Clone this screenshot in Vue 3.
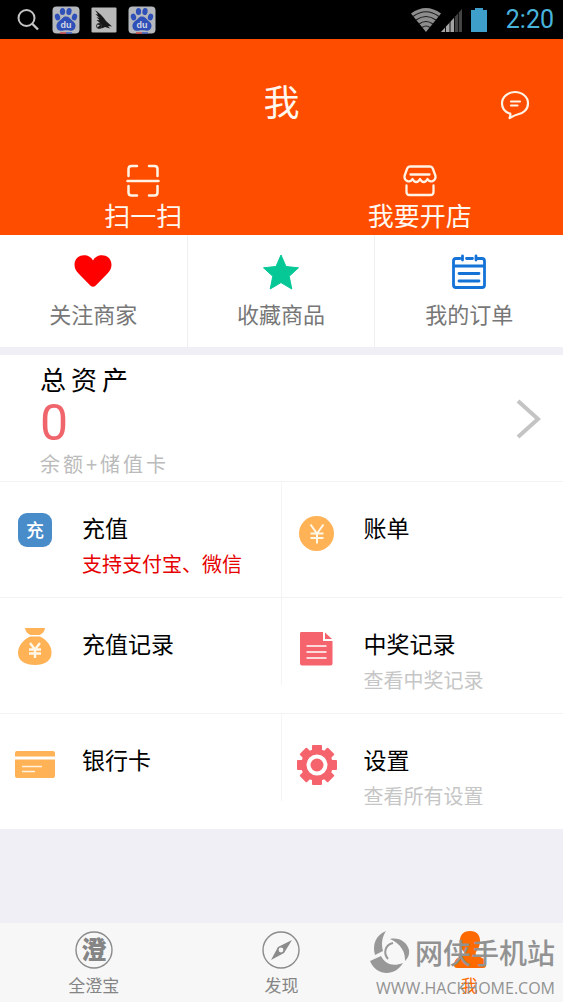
<script setup>
const stats = [
  { id: 'heart', label: '关注商家' },
  { id: 'star', label: '收藏商品' },
  { id: 'order', label: '我的订单' }
]

const items = [
  { id: 'topup', title: '充值', note: '支持支付宝、微信', hot: true },
  { id: 'bill', title: '账单' },
  { id: 'bag', title: '充值记录' },
  { id: 'doc', title: '中奖记录', note: '查看中奖记录' },
  { id: 'card', title: '银行卡' },
  { id: 'gear', title: '设置', note: '查看所有设置' }
]

const teeth = [0, 45, 90, 135, 180, 225, 270, 315]
const tray = ['paw', 'bird', 'paw']
</script>

<template>
  <div class="app">
    <div class="status">
      <div class="tray">
        <svg class="search" width="24" height="24" viewBox="0 0 24 24">
          <circle cx="10.500" cy="10" r="8" fill="none" stroke="#c4c4c4" stroke-width="2" />
          <path d="M16 15.500L22 21.500" stroke="#c4c4c4" stroke-width="2.400" />
        </svg>
        <svg v-for="(kind, i) in tray" :key="i" width="28" height="28" viewBox="0 0 28 28">
          <template v-if="kind === 'paw'">
            <rect x="0.500" y="0.500" width="27" height="27" rx="4" fill="#b5b8bd" />
            <g fill="#2e50b8">
              <ellipse cx="5.500" cy="11" rx="2.600" ry="3.400" transform="rotate(-15 5.500 11)" />
              <ellipse cx="10.500" cy="5.500" rx="2.600" ry="3.600" />
              <ellipse cx="17" cy="5.500" rx="2.600" ry="3.600" transform="rotate(10 17 5.500)" />
              <ellipse cx="22.500" cy="11" rx="2.600" ry="3.400" transform="rotate(15 22.500 11)" />
              <path d="M14 10.500c3 0 4 2 5.500 3.500s4.500 3 4 6.500-3 4.500-5 4.300-2.600-.5-4.500-.5-3 .5-5 .5-4.200-1-4.500-4.300 2-5 4-6.500 2.500-3.500 5.500-3.500z" />
            </g>
            <text x="14" y="22" text-anchor="middle" class="du">du</text>
            <path d="M8 27h6" stroke="#c84a4a" stroke-width="1.500" />
            <path d="M14 27h6" stroke="#3b5cc0" stroke-width="1.500" />
          </template>
          <template v-else>
            <rect x="1.500" y="1.500" width="25" height="25" rx="1" fill="#b9b9b9" />
            <path d="M5 4c4 2.500 8 6.500 11 11l6 5.500-4-.5 2 2.500-5-1.500c-2 1.500-6 2-8 .5l3-2-3-1.500 3-1-3.500-3 3 .3L6.500 11l3 1L5.500 8l2.500.5z" fill="#171717" />
            <circle cx="9" cy="20" r="2.500" fill="none" stroke="#333" />
          </template>
        </svg>
      </div>
      <div class="signals">
        <svg width="80" height="28" viewBox="0 0 80 28">
          <path d="M1 7.500Q16 -3.500 31 7.500L16 26z" fill="#8d8d8d" />
          <path d="M3 10.500Q16 1 29 10.500M6 14Q16 7 26 14M9 18Q16 13 23 18M12 21.500Q16 18.500 20 21.500" fill="none" stroke="#1c1c1c" stroke-width="1.200" />
          <path d="M31 26L52 3V26z" fill="#444" />
          <path d="M31 26L44 12V26z" fill="#a5a5a5" />
          <path d="M35.500 20V26M40 15V26M44.500 10V26M48.500 6V26" stroke="#111" stroke-width="1" />
          <path d="M61 4h4V2h8v2h4v22H61z" fill="#3d9fca" />
        </svg>
        <span class="time">2:20</span>
      </div>
    </div>

    <header class="header">
      <h1>我</h1>
      <button class="message" aria-label="消息">
        <svg width="30" height="30" viewBox="0 0 30 30" fill="none" stroke="#fff3e6" stroke-width="2.200" stroke-linecap="round" stroke-linejoin="round">
          <path d="M9.500 23.500C5 21.800 2 17.800 2 13.500 2 7.200 7.800 2 15 2s13 5 13 11.300c0 6-4.500 10.400-10.500 11.200-2.500.5-4.500 1.700-8 3.500 1-2 1-3 .8-4.300" />
          <path d="M11 11.500h9M11 15.500h6.500" />
        </svg>
      </button>
      <div class="actions">
        <button>
          <svg width="34" height="34" viewBox="0 0 34 34" fill="none" stroke="#fff3e6" stroke-width="2.500" stroke-linecap="round">
            <path d="M2.500 12V5q0-3 3-3H11M23 2h5.500q3 0 3 3v7M2.500 22v6.500q0 3 3 3H11M23 31.500h5.500q3 0 3-3V22M1.500 17h31" />
          </svg>
          <span>扫一扫</span>
        </button>
        <button>
          <svg width="34" height="34" viewBox="0 0 34 34" fill="none" stroke="#fff3e6" stroke-width="2.300" stroke-linecap="round" stroke-linejoin="round">
            <path d="M7 2.500h20q2 0 2.800 2L32.500 12c.5 5-5.500 7.500-8 3-2 4-5.500 4-7.500 0-2 4-5.500 4-7.500 0-2.500 4.500-8.500 2-8-3l2.700-7.500Q5 2.500 7 2.500zM7.500 10.500h19M3.500 21.500V28q0 3 3 3h21q3 0 3-3v-6.500" />
          </svg>
          <span>我要开店</span>
        </button>
      </div>
    </header>

    <nav class="stats">
      <a v-for="s in stats" :key="s.id" href="#">
        <svg width="40" height="40" viewBox="0 0 40 40">
          <path v-if="s.id === 'heart'" d="M20 7.500C23-.0 38-.5 38.500 11.500c0 4-1.500 6.500-4 9L22.500 32.700q-2.500 2-5 0L5.500 20.500c-2.500-2.500-4-5-4-9C2-.5 17 0 20 7.500z" fill="#fe0000" />
          <path v-else-if="s.id === 'star'" d="M20 2l5 11.500 12.500 1.300-9.300 8.500L30.800 36 20 29.600 9.200 36l2.600-12.700-9.300-8.500L15 13.500z" fill="#05c896" stroke="#05c896" stroke-linejoin="round" />
          <g v-else fill="none" stroke="#1573d8" stroke-width="2.800" stroke-linecap="round">
            <path d="M11 5.500H7q-2.500 0-2.500 2.500v24q0 2.500 2.500 2.500h26q2.500 0 2.500-2.500V8q0-2.500-2.500-2.500h-4M17.500 5.500h6M13.500 3v4M27 3v4M5 13h30" />
            <path d="M10 20.500h20M10 28h20" />
          </g>
        </svg>
        <span>{{ s.label }}</span>
      </a>
    </nav>

    <a class="assets" href="#">
      <div>
        <h2>总资产</h2>
        <p class="amount">0</p>
        <p class="caption">余额+储值卡</p>
      </div>
      <svg width="26" height="40" viewBox="0 0 26 40" fill="none" stroke="#c4c4c4" stroke-width="4">
        <path d="M2 2L22 20 2 38" />
      </svg>
    </a>

    <section class="grid">
      <a v-for="item in items" :key="item.id" class="item" href="#">
        <svg width="40" height="42" viewBox="0 0 40 42">
          <template v-if="item.id === 'topup'">
            <rect x="3" y="2" width="34" height="34" rx="9" fill="#488cc9" />
            <text x="20" y="26" text-anchor="middle" class="chong">充</text>
          </template>
          <template v-else-if="item.id === 'bill'">
            <circle cx="19.500" cy="22.500" r="17.500" fill="#ffb256" />
            <path d="M13.500 13.500l6.500 9 6.500-9M20 22.500V32.500M13.500 22.500h13M13.500 27h13" fill="none" stroke="#fff8e8" stroke-width="2" />
          </template>
          <template v-else-if="item.id === 'bag'">
            <path d="M10 1h20q-.5 5-5.500 7h-9Q10.500 6 10 1zM15 9.500h10C32 13 37 19 36.500 26c0 8-7 12-16.500 12S3 34 3 26C3 19 8 13 15 9.500z" fill="#ffb256" />
            <path d="M15 16l5 6.500 5-6.500M20 22v9M14 22.500h12M14 26.500h12" fill="none" stroke="#fff8e8" stroke-width="2.400" />
          </template>
          <template v-else-if="item.id === 'doc'">
            <path d="M4 5h22v9h9.500v22.500q0 2-2 2H5q-2 0-2-2V6.500Q3 5 4 5z" fill="#f5636c" />
            <path d="M28 5.500L35 12h-7z" fill="#f5636c" />
            <path d="M9.500 19h20M9.500 25h20M9.500 31h20" stroke="#fff" stroke-width="1.600" />
          </template>
          <template v-else-if="item.id === 'card'">
            <path d="M2 8h36q2 0 2 2v3.500H0V10q0-2 2-2zM0 16.500h40V33q0 2-2 2H2q-2 0-2-2z" fill="#ffb256" />
            <path d="M7 23.500h20M7 28.500h13" stroke="#fff3df" stroke-width="1.600" />
          </template>
          <template v-else>
            <g fill="#f5636c">
              <rect v-for="t in teeth" :key="t" x="15" y="2" width="10" height="10" rx="1" :transform="`rotate(${t} 20 22)`" />
              <circle cx="20" cy="22" r="16" />
            </g>
            <circle cx="20" cy="22" r="8.500" fill="none" stroke="#fff" stroke-width="4" />
          </template>
        </svg>
        <div>
          <h3>{{ item.title }}</h3>
          <p v-if="item.note" :class="{ hot: item.hot }">{{ item.note }}</p>
        </div>
      </a>
    </section>

    <nav class="tabs">
      <a href="#">
        <svg width="40" height="40" viewBox="0 0 40 40">
          <circle cx="20" cy="20" r="18" fill="none" stroke="#8b8b8b" stroke-width="1.400" />
          <text x="20" y="29" text-anchor="middle" class="cheng">澄</text>
        </svg>
        <span>全澄宝</span>
      </a>
      <a href="#">
        <svg width="40" height="40" viewBox="0 0 40 40">
          <circle cx="20" cy="20" r="18" fill="none" stroke="#8b8b8b" stroke-width="1.400" />
          <path d="M31 10L23 23 10 30l7-13z" fill="#8b8b8b" />
          <circle cx="20" cy="20" r="2.400" fill="#f7f7f7" />
        </svg>
        <span>发现</span>
      </a>
      <a href="#" class="active">
        <svg width="40" height="40" viewBox="0 0 40 40">
          <path d="M21 1c7 0 10.500 4.500 10 11-.3 4.500-2 7.500-4 10-1 2 0 3 2 4 5 1.800 7.500 3.500 8 9q.2 3-3 3H8q-3 0-3-3c.5-5.500 3-7.200 8-9 2.500-1 3-2 2-4-2-2.500-3.800-5.500-4-10C10.500 5.500 14 1 21 1z" fill="#ff6a00" />
        </svg>
        <span>我</span>
      </a>
      <div class="brand">
        <div class="brand-name">
          <svg width="42" height="44" viewBox="0 0 42 44" fill="#989898">
            <path d="M17 1C7 5 3 14 6 25l8-4C12 14 13 7 17 1z" />
            <path d="M1 31l11-5c4 8 12 11 22 7C26 47 7 46 1 31z" />
            <path d="M21 9c9-2 17 3 19 11 .5 5-1 8-4 11 0-5-.5-8-3-12-3-5-7-8-12-10z" />
            <path d="M24 13c-8 2-10 10-5 16" fill="none" stroke="#989898" stroke-width="2" />
          </svg>
          <span>网侠手机站</span>
        </div>
        <span class="brand-url">WWW.HACKHOME.COM</span>
      </div>
    </nav>
  </div>
</template>

<style>
body {
  margin: 0;
  background: #efeff5;
}
</style>

<style scoped>
.app {
  display: flex;
  flex-direction: column;
  min-height: 100vh;
  background: #efeff5;
  font-family: "Noto Sans CJK SC", sans-serif;
}
h1, h2, h3, p {
  margin: 0;
  font-weight: 400;
}
a {
  color: inherit;
  text-decoration: none;
}
button {
  padding: 0;
  border: 0;
  background: none;
  color: inherit;
  font: inherit;
  cursor: pointer;
}
svg {
  display: block;
  flex: none;
}
.status {
  display: flex;
  align-items: center;
  justify-content: space-between;
  height: 39px;
  padding: 0 9px 0 16px;
  background: #000;
}
.tray, .signals {
  display: flex;
  align-items: center;
  gap: 10px;
}
.search {
  margin-right: 2px;
}
.signals {
  gap: 16px;
}
.time {
  color: #48b4dc;
  font: 25px/39px Roboto, sans-serif;
}
.du {
  fill: #d5d8e4;
  font: bold 9px "Liberation Sans", sans-serif;
}
.header {
  position: relative;
  padding-top: 37px;
  background: #ff4d00;
  color: #fff8f0;
}
h1 {
  font-size: 36px;
  line-height: 48px;
  text-align: center;
}
.message {
  position: absolute;
  top: 51px;
  right: 33px;
}
.actions {
  display: grid;
  grid-template-columns: 1fr 1fr;
  padding: 40px 5px 4px;
}
.actions button {
  display: flex;
  flex-direction: column;
  align-items: center;
  font-size: 26px;
  line-height: 33px;
}
.stats {
  display: grid;
  grid-template-columns: repeat(3, 1fr);
  margin-bottom: 8px;
  background: #fff;
  color: #777;
}
.stats a {
  display: flex;
  flex-direction: column;
  align-items: center;
  gap: 4px;
  height: 94px;
  padding-top: 18px;
  font-size: 22px;
  line-height: 32px;
  border-right: 1px solid #f0f0f3;
}
.stats a:last-of-type {
  border-right: 0;
}
.assets {
  display: flex;
  align-items: center;
  justify-content: space-between;
  padding: 6px 21px 4px 40px;
  height: 116px;
  background: #fff;
}
h2 {
  font-size: 26px;
  line-height: 34px;
  letter-spacing: 5px;
}
.amount {
  color: #f0646c;
  font: 50px/55px Roboto, sans-serif;
}
.caption {
  color: #bbb;
  font-size: 20px;
  line-height: 26px;
  letter-spacing: 3px;
}
.grid {
  display: grid;
  grid-template-columns: 1fr 1fr;
  background: #fff;
}
.item {
  display: flex;
  align-items: flex-start;
  gap: 27px;
  box-sizing: border-box;
  height: 116px;
  padding: 29px 0 0 15px;
  border-top: 1px solid #f2f2f4;
}
.item:nth-child(odd) {
  background: linear-gradient(#f4f4f6, #f4f4f6) right top / 1px 87px no-repeat;
}
.item:nth-child(1) {
  background-size: 1px 100%;
}
h3 {
  font-size: 23px;
  line-height: 32px;
}
.item p {
  color: #c6c6c6;
  font-size: 20px;
  line-height: 42px;
}
.item .hot {
  color: #e60000;
}
.chong {
  fill: #fff;
  font: 500 18px "Noto Sans CJK SC", sans-serif;
}
.cheng {
  fill: #858585;
  font: 900 25px "Noto Sans CJK SC", sans-serif;
}
.tabs {
  position: relative;
  display: grid;
  grid-template-columns: repeat(3, 1fr);
  margin-top: auto;
  background: #f7f7f7;
  color: #858585;
}
.tabs a {
  display: flex;
  flex-direction: column;
  align-items: center;
  gap: 2px;
  padding: 7px 0 4px;
  font-size: 17px;
  line-height: 26px;
}
.tabs .active {
  color: #ff6a00;
}
.brand {
  position: absolute;
  right: 8px;
  bottom: 2px;
  color: #929292;
  pointer-events: none;
}
.brand-name {
  display: flex;
  align-items: center;
  justify-content: flex-end;
  gap: 4px;
  font-size: 28px;
  font-weight: 500;
  line-height: 48px;
}
.brand-url {
  display: block;
  font: 16px/24px "Open Sans", sans-serif;
  text-align: right;
}
</style>
